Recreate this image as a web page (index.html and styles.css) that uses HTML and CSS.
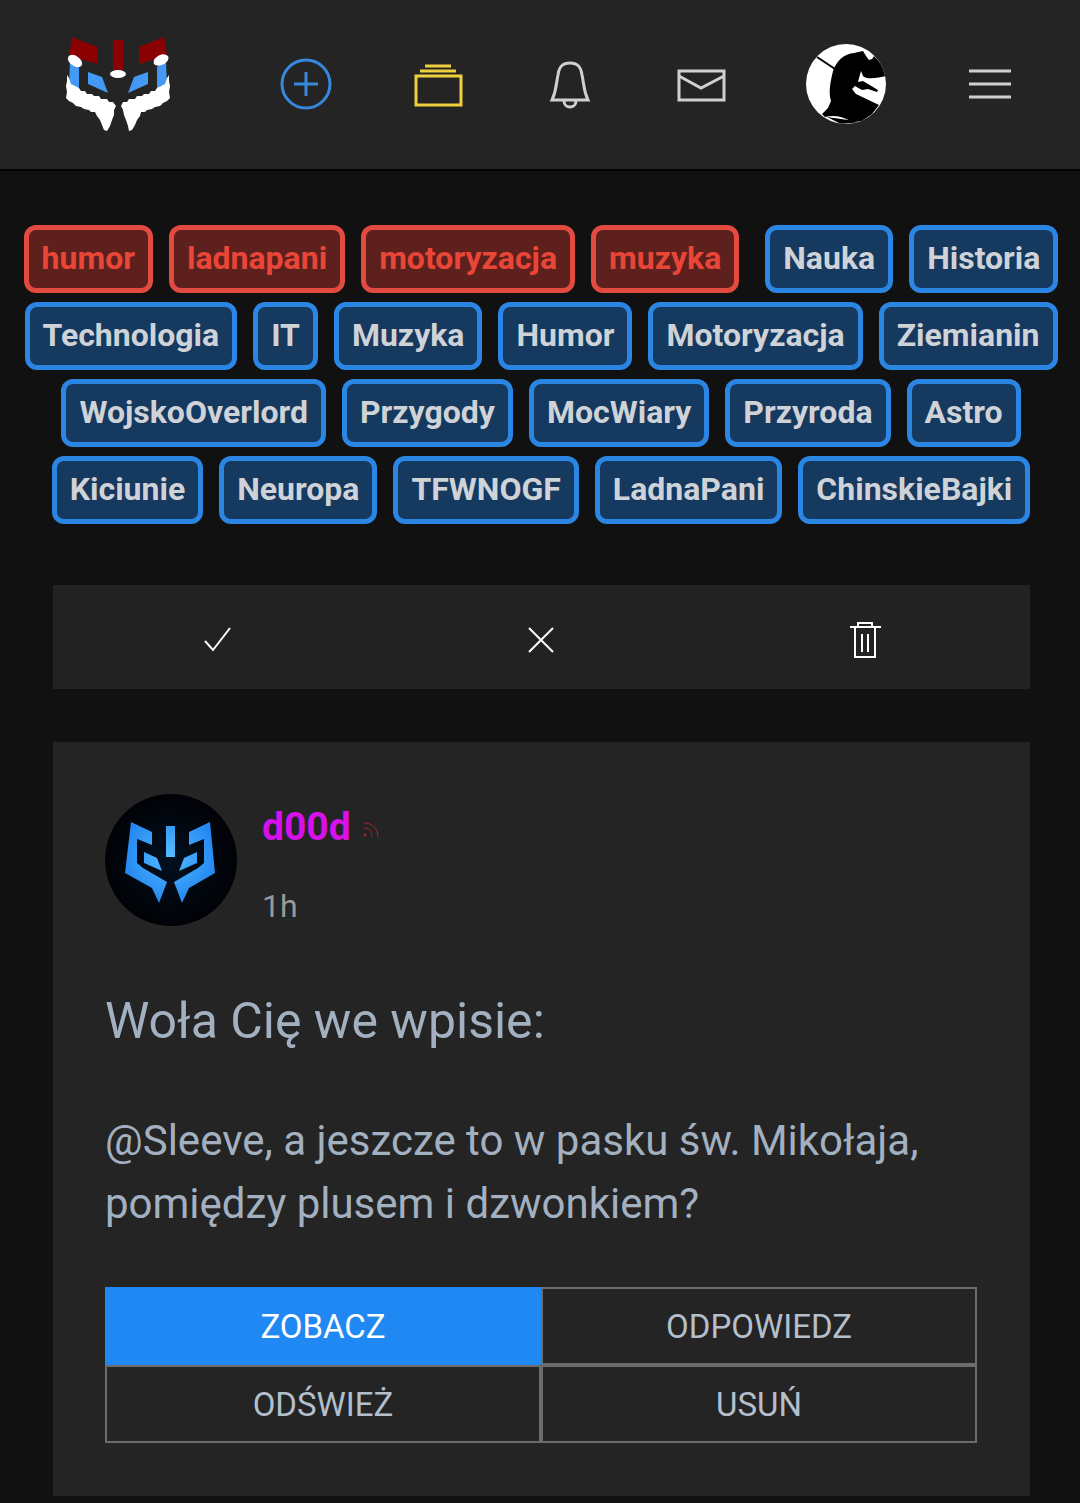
FILE: index.html
```html
<!DOCTYPE html>
<html lang="pl">
    <head>
        <meta charset="utf-8">
        <meta name="viewport" content="width=device-width, initial-scale=1">
        <title>Powiadomienia</title>
        <link rel="stylesheet" href="styles.css">
    </head>
    <body>
        <header class="topbar">
            <a href="#" class="logo" aria-label="Strona główna">
                <svg width="108" height="96" viewBox="0 0 108 96">
                    <g fill="#8b0000">
                        <path d="M8 1L33 11V28L27 26L5 20z" />
                        <path d="M49 4H59V34H49z" />
                        <path d="M100 1L75 11V28L81 26L103 20z" />
                    </g>
                    <g fill="#4499f5">
                        <path d="M6 25L15 31V54L5 50z" />
                        <path d="M102 25L93 31V54L103 50z" />
                        <path d="M24 36L38 41L44 57L24 48z" />
                        <path d="M84 36L70 41L64 57L84 48z" />
                    </g>
                    <g fill="#fff">
                        <ellipse cx="11" cy="25" rx="8" ry="5" transform="rotate(35 11 25)" />
                        <ellipse cx="97" cy="24" rx="8" ry="5" transform="rotate(-25 97 24)" />
                        <ellipse cx="54" cy="38" rx="8" ry="4" />
                        <path d="M3 39L5 42L7 48L11 50L15 52L17 55L21 55L23 58L28 58L30 60L35 60L37 63L43 63L45 66L49 66L52 70L50 74L50 79L48 84L46 90L43 95L40 94L38 89L36 84L33 80L31 76L27 76L25 74L20 73L17 71L12 70L9 67L5 65L2 62L3 56L2 50L3 45z" />
                        <path d="M105 39L103 42L101 48L97 50L93 52L91 55L87 55L85 58L80 58L78 60L73 60L71 63L65 63L63 66L59 66L57 70L59 74L60 79L62 84L64 90L65 95L68 94L71 89L73 84L76 80L77 76L81 76L83 74L88 73L91 71L96 70L99 67L103 65L106 62L105 56L106 50L105 45z" />
                    </g>
                </svg>
            </a>
            <a href="#" class="icon-link icon-add" aria-label="Dodaj">
                <svg width="52" height="52" viewBox="0 0 52 52">
                    <circle cx="26" cy="26" r="24" />
                    <path d="M26 14V38M14 26H38" />
                </svg>
            </a>
            <a href="#" class="icon-link icon-stack" aria-label="Strumień">
                <svg width="50" height="52" viewBox="0 0 50 52">
                    <path d="M12 8H38M7 13H43M3 18H48V47H3z" />
                </svg>
            </a>
            <a href="#" class="icon-link" aria-label="Powiadomienia">
                <svg width="44" height="52" viewBox="0 0 44 52">
                    <path d="M4 42C9 31 8 25 10 17C11 9 14 5 22 5S33 9 34 17C36 25 35 31 40 42z" />
                    <path d="M16 43C16 51 28 51 28 43" />
                </svg>
            </a>
            <a href="#" class="icon-link" aria-label="Wiadomości">
                <svg width="50" height="52" viewBox="0 0 50 52">
                    <path d="M2 13H47V42H2z" />
                    <path d="M2 18L24 30L47 18" />
                </svg>
            </a>
            <a href="#" class="icon-link" aria-label="Profil">
                <svg class="user-avatar" width="80" height="80" viewBox="0 0 80 80">
                    <rect width="80" height="80" fill="#fff" />
                    <path d="M11 13L29 25" stroke="#000" stroke-width="2" fill="none" />
                    <path fill="#000" d="M57 7L60 12L63 16L66 15L68 12L76 21L80 32C73 34 60 36 57 32L55 27L53 34L52 38L57 37L62 40L72 46L71 48L62 45L56 46L49 42L46 45L50 50L73 61L66 70L56 77L44 77C36 72 27 71 19 73L16 70L22 64L25 57C22 47 25 36 27 27C31 16 38 10 48 9z" />
                    <path d="M21 73L56 78L35 80z" fill="#000" />
                </svg>
            </a>
            <button type="button" class="icon-link" aria-label="Menu">
                <svg width="44" height="52" viewBox="0 0 44 52">
                    <path d="M1 13H43M1 26H43M1 39H43" />
                </svg>
            </button>
        </header>

        <nav class="tags">
            <a href="#" class="tag tag-red">humor</a>
            <a href="#" class="tag tag-red">ladnapani</a>
            <a href="#" class="tag tag-red">motoryzacja</a>
            <a href="#" class="tag tag-red tag-last">muzyka</a>
            <a href="#" class="tag">Nauka</a>
            <a href="#" class="tag">Historia</a>
            <a href="#" class="tag">Technologia</a>
            <a href="#" class="tag">IT</a>
            <a href="#" class="tag">Muzyka</a>
            <a href="#" class="tag">Humor</a>
            <a href="#" class="tag">Motoryzacja</a>
            <a href="#" class="tag">Ziemianin</a>
            <a href="#" class="tag">WojskoOverlord</a>
            <a href="#" class="tag">Przygody</a>
            <a href="#" class="tag">MocWiary</a>
            <a href="#" class="tag">Przyroda</a>
            <a href="#" class="tag">Astro</a>
            <a href="#" class="tag">Kiciunie</a>
            <a href="#" class="tag">Neuropa</a>
            <a href="#" class="tag">TFWNOGF</a>
            <a href="#" class="tag">LadnaPani</a>
            <a href="#" class="tag">ChinskieBajki</a>
        </nav>

        <main class="content">
            <div class="toolbar">
                <button type="button" aria-label="Oznacz jako przeczytane">
                    <svg width="40" height="40" viewBox="0 0 40 40">
                        <path d="M8 21L16 30L33 8" />
                    </svg>
                </button>
                <button type="button" aria-label="Zamknij">
                    <svg width="40" height="40" viewBox="0 0 40 40">
                        <path d="M8 8L32 32M32 8L8 32" />
                    </svg>
                </button>
                <button type="button" aria-label="Usuń wszystkie">
                    <svg width="40" height="40" viewBox="0 0 40 40">
                        <path d="M4 7H35M12 7V3H26V7M9 7V37H29V7M16 14V32M22 14V32" />
                    </svg>
                </button>
            </div>

            <article class="card">
                <div class="author">
                    <svg class="author-avatar" width="132" height="132" viewBox="0 0 132 132">
                        <defs>
                            <radialGradient id="bg">
                                <stop offset="0" stop-color="#03101f" />
                                <stop offset="1" stop-color="#010206" />
                            </radialGradient>
                            <radialGradient id="glow" gradientUnits="userSpaceOnUse" cx="65" cy="62" r="48">
                                <stop offset="0" stop-color="#55bdff" />
                                <stop offset="1" stop-color="#2386f2" />
                            </radialGradient>
                        </defs>
                        <circle cx="66" cy="66" r="66" fill="url(#bg)" />
                        <g fill="url(#glow)">
                            <path d="M26 28L47 38V51L32 45V69L38 74L62 88L54 109L47 94L20 79z" />
                            <path d="M105 28L84 38V51L99 45V69L93 74L69 88L77 109L84 94L110 79z" />
                            <path d="M61 32H70V63H61z" />
                            <path d="M39 58L52 64L57 77L39 69z" />
                            <path d="M92 58L79 64L74 77L92 69z" />
                        </g>
                    </svg>
                    <div class="author-info">
                        <a href="#" class="author-name">d00d
                            <svg width="18" height="18" viewBox="0 0 18 18">
                                <circle cx="3" cy="14" r="1" />
                                <path d="M2 7C7 7 10 10 10 16M2 2C11 2 16 8 16 16" />
                            </svg>
                        </a>
                        <time>1h</time>
                    </div>
                </div>
                <h2>Woła Cię we wpisie:</h2>
                <p>@Sleeve, a jeszcze to w pasku św. Mikołaja, pomiędzy plusem i dzwonkiem?</p>
                <div class="actions">
                    <button type="button" class="primary">ZOBACZ</button>
                    <button type="button">ODPOWIEDZ</button>
                    <button type="button">ODŚWIEŻ</button>
                    <button type="button">USUŃ</button>
                </div>
            </article>
        </main>
    </body>
</html>
```
FILE: styles.css
```css
* {
    box-sizing: border-box;
}

body {
    margin: 0;
    background-color: #111;
    color: #a2b0c0;
    font-family: Roboto, "Liberation Sans", sans-serif;
}

a {
    text-decoration: none;
}

button {
    margin: 0;
    padding: 0;
    border: none;
    background: none;
    color: inherit;
    font-family: inherit;
    cursor: pointer;
}

svg {
    display: block;
}

/* top bar */
.topbar {
    display: grid;
    grid-template-columns: 240fr 132fr 132fr 132fr 132fr 156fr 132fr;
    align-items: center;
    justify-items: center;
    height: 171px;
    padding: 0 24px 2px 0;
    border-bottom: 2px solid #050505;
    background-color: #242424;
}

.logo {
    padding-right: 4px;
}

.icon-link {
    fill: none;
    stroke: #d0d0d0;
    stroke-width: 3px;
}

.icon-link svg {
    overflow: visible;
}

.icon-add {
    stroke: #3787dc;
}

.icon-stack {
    stroke: #f0cf3c;
}

.icon-link .user-avatar {
    overflow: hidden;
    border-radius: 50%;
    stroke: none;
}

/* tags */
.tags {
    display: flex;
    flex-wrap: wrap;
    justify-content: center;
    gap: 9px 16px;
    padding: 54px 14px 61px 16px;
}

.tag {
    height: 68px;
    padding: 0 13px;
    border: 5px solid #2a86e2;
    border-radius: 12px;
    background-color: #15395f;
    color: #cfd3d8;
    font-size: 32px;
    font-weight: bold;
    line-height: 57px;
}

.tag-red {
    border-color: #e34b40;
    background-color: #5d201c;
    color: #ea4638;
}

.tag-last {
    margin-right: 10px;
}

.content {
    padding: 0 50px 7px 53px;
}

.toolbar {
    display: grid;
    grid-template-columns: repeat(3, 1fr);
    height: 104px;
    margin-bottom: 53px;
    padding: 6px 2px 0;
    background-color: #222;
}

.toolbar svg {
    margin: 0 auto;
    fill: none;
    stroke: #fff;
    stroke-width: 2px;
}

/* notification */
.card {
    padding: 52px 53px 53px 52px;
    background-color: #242424;
}

.author {
    display: flex;
    gap: 25px;
}

.author-info {
    display: flex;
    flex-direction: column;
    justify-content: space-between;
    padding: 10px 0 0;
}

.author-name {
    display: flex;
    align-items: center;
    gap: 11px;
    color: #d611ea;
    font-size: 39px;
    font-weight: bold;
    line-height: 46px;
}

.author-name svg {
    margin-top: 6px;
    fill: #a52424;
    stroke: #a52424;
    stroke-width: 1px;
}

.author-name path {
    fill: none;
}

.author time {
    color: #999;
    font-size: 32px;
    line-height: 40px;
}

.card h2 {
    margin: 64px 0 57px;
    font-size: 50px;
    font-weight: normal;
    line-height: 62px;
}

.card p {
    margin: 0 0 52px;
    font-size: 42px;
    line-height: 63px;
}

.actions {
    display: grid;
    grid-template-columns: 1fr 1fr;
}

.actions button {
    height: 78px;
    border: 2px solid #6c6c6c;
    color: #b4bfcc;
    font-size: 33px;
}

.actions .primary {
    border-color: #1f88f2;
    background-color: #1f88f2;
    color: #fff;
}
```
